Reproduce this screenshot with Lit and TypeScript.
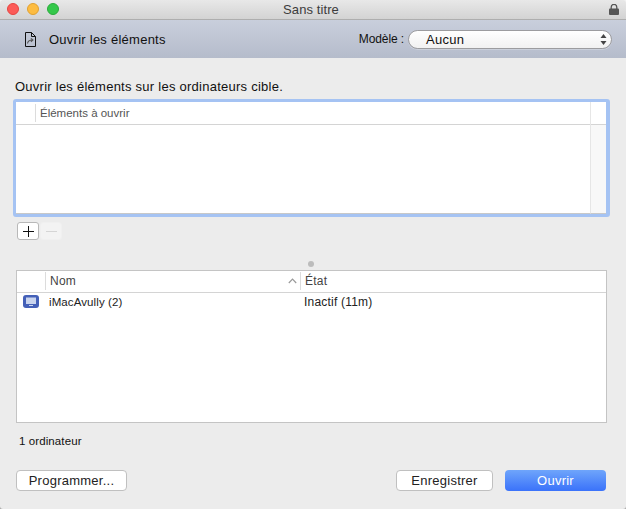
import { LitElement, html, css } from "lit";
import { customElement } from "lit/decorators.js";

@customElement("app-root")
export class AppRoot extends LitElement {
  static styles = css`
    :host { display: block; width: 626px; height: 509px; font-family: "Liberation Sans", Arial, sans-serif; font-size: 13px; color: #1a1a1a; background: linear-gradient(#f2f2f2 50%, #a8a8a8 50%); overflow: hidden; letter-spacing: 0.25px; }
    .win { width: 626px; height: 509px; display: flex; flex-direction: column; box-sizing: border-box; background: #ececec; border-radius: 4px 4px 3px 3px; overflow: hidden; }
    .titlebar { height: 19px; flex: none; display: grid; grid-template-columns: 1fr auto 1fr; align-items: center; background: linear-gradient(#e8e8e8, #d3d3d3); border-bottom: 1px solid #aeaeae; padding: 0 7px; }
    .lights { display: flex; gap: 8px; align-self: start; margin-top: 3px; }
    .light { width: 12px; height: 12px; border-radius: 50%; box-sizing: border-box; }
    .red { background: #fc5b57; border: 1px solid #e5453f; }
    .yellow { background: #fdbc40; border: 1px solid #e0a030; }
    .green { background: #34c84a; border: 1px solid #2bab3c; }
    .wintitle { font-size: 13px; color: #3c3c3c; letter-spacing: 0.1px; transform: translateX(-2px); }
    .lock { justify-self: end; display: flex; }
    .toolbar { height: 38px; flex: none; display: flex; align-items: center; background: linear-gradient(#c9cfdc, #b5bccb); padding: 0 14px 0 25px; }
    .tool-icon { display: block; margin-right: 13px; }
    .tool-title { flex: 1; color: #111; }
    .model { margin-right: 4px; color: #111; font-size: 12px; letter-spacing: -0.1px; }
    .select { width: 204px; height: 19px; box-sizing: border-box; border-radius: 10px; border: 1px solid #9c9c9f; background: linear-gradient(#ffffff, #f1f1f1); display: flex; align-items: center; padding: 0 4px 0 17px; color: #111; box-shadow: 0 1px 0 rgba(255,255,255,.25); }
    .select span { flex: 1; }
    .content { flex: 1; display: flex; flex-direction: column; padding: 21px 20px 18px 16px; min-height: 0; }
    .lead { line-height: 16px; margin-left: -1px; color: #111; }
    .ring { margin: 4px -4px 0 -3px; height: 118px; box-sizing: border-box; border: 3px solid #a5c3f3; border-right-width: 4px; border-radius: 3px; background: #fff; flex: none; display: grid; grid-template-columns: 1fr 16px; }
    .tmain { display: flex; flex-direction: column; min-width: 0; border-bottom: 1px solid #c8c8c8; }
    .thead { height: 22px; flex: none; display: flex; align-items: center; border-bottom: 1px solid #d4d4d4; color: #555; font-size: 11.5px; letter-spacing: 0; background: #fff; }
    .c0 { width: 19px; height: 18px; border-right: 1px solid #dcdcdc; flex: none; }
    .thead .lbl { padding-left: 4px; }
    .side { border-left: 1px solid #e6e6e6; border-bottom: 1px solid #c8c8c8; background: #f8f8f8; display: flex; flex-direction: column; }
    .side .top { height: 22px; border-bottom: 1px solid #d4d4d4; background: #fff; box-sizing: content-box; }
    .pm { display: flex; margin: 5px 0 0 1px; gap: 1px; }
    .pm div { width: 22px; height: 18px; box-sizing: border-box; border-radius: 3px; display: flex; align-items: center; justify-content: center; }
    .plus { background: #fff; border: 1px solid #b8b8b8; }
    .minus { background: #f3f3f3; border: 1px solid #f0f0f0; }
    .dot { width: 6px; height: 6px; border-radius: 50%; background: #bcbcbc; margin: 21px auto 3px; flex: none; }
    .table { height: 153px; width: 591px; box-sizing: border-box; border: 1px solid #c4c4c4; background: #fff; flex: none; }
    .head2 { height: 21px; box-sizing: border-box; padding-bottom: 2px; display: flex; align-items: center; font-size: 12px; color: #444; box-shadow: 0 1px 0 #d4d4d4; }
    .h0 { width: 28px; height: 18px; border-right: 1px solid #dcdcdc; flex: none; }
    .h1 { width: 255px; height: 18px; border-right: 1px solid #dcdcdc; flex: none; display: flex; align-items: center; justify-content: space-between; padding: 0 3px 0 4px; box-sizing: border-box; }
    .h2 { padding-left: 4px; }
    .row { display: flex; align-items: center; height: 17px; margin-top: 1px; font-size: 11.5px; letter-spacing: 0.1px; color: #222; }
    .r0 { width: 29px; flex: none; display: flex; justify-content: flex-start; padding-left: 6px; box-sizing: border-box; }
    .r1 { width: 255px; flex: none; padding-left: 3px; box-sizing: border-box; }
    .r2 { padding-left: 3px; font-size: 12px; letter-spacing: 0.2px; }
    .count { margin-top: 10px; font-size: 11.5px; letter-spacing: 0.1px; line-height: 16px; margin-left: 3px; color: #111; }
    .footer { display: flex; margin-top: 21px; align-items: stretch; }
    .btn { height: 21px; box-sizing: border-box; border-radius: 4px; border: 1px solid #c0c0c0; background: #fff; display: flex; align-items: center; justify-content: center; color: #222; }
    .prog { width: 111px; }
    .spacer { flex: 1; }
    .save { width: 97px; margin-right: 12px; }
    .open { width: 101px; border: 0; background: linear-gradient(#6fa5fb, #3a72fa); color: #fff; }
  `;

  render() {
    return html`
      <div class="win">
        <div class="titlebar">
          <div class="lights"><div class="light red"></div><div class="light yellow"></div><div class="light green"></div></div>
          <div class="wintitle">Sans titre</div>
          <div class="lock">
            <svg width="10" height="11" viewBox="0 0 10 11"><path d="M2.2 5V3.2a2.8 2.8 0 0 1 5.6 0V5" fill="none" stroke="#555" stroke-width="1.3"/><rect x="0" y="4.5" width="10" height="6.5" rx="1" fill="#555"/></svg>
          </div>
        </div>
        <div class="toolbar">
          <svg class="tool-icon" width="11" height="15" viewBox="0 0 11 15"><path d="M.5.5H6.5L10.5 4.5V14.5H.5Z M6.5.5V4.5H10.5" fill="none" stroke="#111" stroke-width="1"/><path d="M2.5 11.5C2.8 9 4.5 8 7.5 8M5.9 6.4 7.9 8 5.9 9.8" fill="none" stroke="#555" stroke-width="1.1"/></svg>
          <div class="tool-title">Ouvrir les éléments</div>
          <div class="model">Modèle :</div>
          <div class="select"><span>Aucun</span>
            <svg width="7" height="11" viewBox="0 0 7 11"><path d="M3.5 0 6.5 4H.5ZM3.5 11 .5 7H6.5Z" fill="#444"/></svg>
          </div>
        </div>
        <div class="content">
          <div class="lead">Ouvrir les éléments sur les ordinateurs cible.</div>
          <div class="ring">
            <div class="tmain">
              <div class="thead"><div class="c0"></div><div class="lbl">Éléments à ouvrir</div></div>
            </div>
            <div class="side"><div class="top"></div></div>
          </div>
          <div class="pm">
            <div class="plus"><svg width="11" height="11" viewBox="0 0 11 11"><path d="M5.5 0V11M0 5.5H11" stroke="#111" stroke-width="1"/></svg></div>
            <div class="minus"><svg width="11" height="3" viewBox="0 0 11 3"><path d="M0 1.5H11" stroke="#d5d5d5" stroke-width="1"/></svg></div>
          </div>
          <div class="dot"></div>
          <div class="table">
            <div class="head2">
              <div class="h0"></div>
              <div class="h1"><span>Nom</span><svg width="9" height="6" viewBox="0 0 9 6"><path d="M.8 5 4.5 1.2 8.2 5" fill="none" stroke="#9a9a9a" stroke-width="1.2"/></svg></div>
              <div class="h2">État</div>
            </div>
            <div class="row">
              <div class="r0">
                <svg width="16" height="13" viewBox="0 0 16 13"><rect width="16" height="13" rx="3" fill="#4460b8"/><rect x="3" y="2.5" width="10" height="6.5" fill="#c9d4ee"/><rect x="6" y="10" width="4" height="1" fill="#c9d4ee"/></svg>
              </div>
              <div class="r1">iMacAvully (2)</div>
              <div class="r2">Inactif (11m)</div>
            </div>
          </div>
          <div class="count">1 ordinateur</div>
          <div class="footer">
            <div class="btn prog">Programmer...</div>
            <div class="spacer"></div>
            <div class="btn save">Enregistrer</div>
            <div class="btn open">Ouvrir</div>
          </div>
        </div>
      </div>
    `;
  }
}
